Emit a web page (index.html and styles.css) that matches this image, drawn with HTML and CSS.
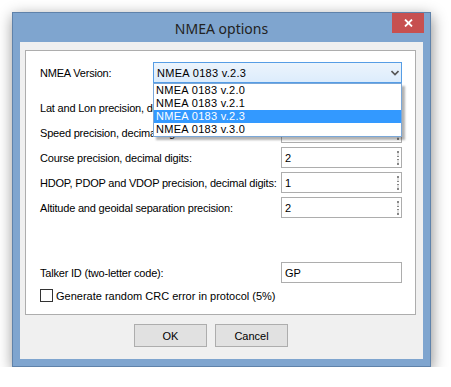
FILE: index.html
```html
<!DOCTYPE html>
<html lang="en">
<head>
    <meta charset="UTF-8">
    <meta name="viewport" content="width=device-width, initial-scale=1.0">
    <title>NMEA options</title>
    <link rel="stylesheet" href="styles.css">
</head>
<body>
    <div class="window">
        <div class="titlebar">
            <span class="title">NMEA options</span>
            <div class="close">
                <svg width="9" height="8" viewBox="0 0 9 8"><path d="M1 0.5 L8 7.5 M8 0.5 L1 7.5" stroke="#fff" stroke-width="1.8"/></svg>
            </div>
        </div>
        <div class="client">
            <div class="panel">
                <div class="row row-version">
                    <label>NMEA Version:</label>
                    <div class="combo">
                        <span>NMEA 0183 v.2.3</span>
                        <svg class="chevron" width="8" height="6" viewBox="0 0 8 6"><path d="M0.5 1 L4 4.5 L7.5 1" fill="none" stroke="#555" stroke-width="1.6"/></svg>
                        <ul class="combo-list">
                            <li>NMEA 0183 v.2.0</li>
                            <li>NMEA 0183 v.2.1</li>
                            <li class="selected">NMEA 0183 v.2.3</li>
                            <li>NMEA 0183 v.3.0</li>
                        </ul>
                    </div>
                </div>
                <div class="fields">
                    <div class="row">
                        <label>Lat and Lon precision, decimal digits:</label>
                        <div class="spin"><span>6</span><i class="spin-arrows"></i></div>
                    </div>
                    <div class="row">
                        <label>Speed precision, decimal digits:</label>
                        <div class="spin"><span>1</span><i class="spin-arrows"></i></div>
                    </div>
                    <div class="row">
                        <label>Course precision, decimal digits:</label>
                        <div class="spin"><span>2</span><i class="spin-arrows"></i></div>
                    </div>
                    <div class="row">
                        <label>HDOP, PDOP and VDOP precision, decimal digits:</label>
                        <div class="spin"><span>1</span><i class="spin-arrows"></i></div>
                    </div>
                    <div class="row">
                        <label>Altitude and geoidal separation precision:</label>
                        <div class="spin"><span>2</span><i class="spin-arrows"></i></div>
                    </div>
                </div>
                <div class="row row-talker">
                    <label>Talker ID (two-letter code):</label>
                    <div class="edit">GP</div>
                </div>
                <div class="check-row">
                    <span class="checkbox"></span>
                    <span>Generate random CRC error in protocol (5%)</span>
                </div>
            </div>
            <div class="buttons">
                <div class="btn">OK</div>
                <div class="btn">Cancel</div>
            </div>
        </div>
    </div>
</body>
</html>
```

FILE: styles.css
```css
:root{
    --frame : #7fa5cf;
    --frame-edge : #5f82aa;
    --client : #f0f0f0;
    --field-border : #adadad;
    --select : #3399ff;
}

*{
    padding: 0;
    margin: 0;
    box-sizing: border-box;
}

ul{
    list-style: none;
}

body{
    background: #fff;
    font-family: "Liberation Sans", Arial, sans-serif;
    font-size: 11px;
    color: #000;
    padding: 12px 0 0 12px;
}

label{
    white-space: nowrap;
    letter-spacing: -0.2px;
}

.window{
    width: 419px;
    height: 355px;
    background: var(--frame);
    border: 1px solid var(--frame-edge);
    box-shadow: 1px 4px 14px rgba(0, 0, 0, 0.45);
    padding: 0 7px 7px 7px;
    display: flex;
    flex-direction: column;
}

.titlebar{
    height: 29px;
    position: relative;
    display: flex;
    align-items: center;
    justify-content: center;
}

.title{
    font-family: "Noto Sans", sans-serif;
    font-size: 14px;
    color: #222;
    margin-top: 2px;
}

.close{
    position: absolute;
    right: -1px;
    top: 0;
    width: 32px;
    height: 20px;
    background: #c75050;
    display: flex;
    align-items: center;
    justify-content: center;
}

.client{
    flex: 1;
    background: var(--client);
    padding: 8px 7px 0 5px;
}

.panel{
    background: #fff;
    border: 1px solid var(--field-border);
    height: 265px;
    padding: 11px 13px 0 14px;
}

.row{
    display: flex;
    align-items: center;
    justify-content: space-between;
    height: 21px;
}

.combo{
    position: relative;
    width: 249px;
    height: 21px;
    border: 1px solid #569de5;
    background: linear-gradient(#ecf4fc, #dcecfc);
    display: flex;
    align-items: center;
    justify-content: space-between;
    padding: 0 2px 0 3px;
    letter-spacing: 0.3px;
}

.combo-list{
    position: absolute;
    left: -1px;
    right: -1px;
    top: 20px;
    background: #fff;
    border: 1px solid #7aa7d8;
    box-shadow: 3px 3px 2px rgba(0, 0, 0, 0.3);
    z-index: 2;
}

.combo-list li{
    height: 13px;
    line-height: 13px;
    padding-left: 2px;
}

.combo-list li.selected{
    background: var(--select);
    color: #fff;
}

.fields{
    margin-top: 14px;
    display: flex;
    flex-direction: column;
    gap: 4px;
}

.spin, .edit{
    width: 121px;
    height: 21px;
    border: 1px solid var(--field-border);
    background: #fff;
    display: flex;
    align-items: center;
    justify-content: space-between;
    padding: 0 2px 0 3px;
}

.spin-arrows{
    width: 2px;
    height: 14px;
    background: linear-gradient(#888 0 2px, #e2e2e2 2px 5px, #888 5px 6px, transparent 6px 8px, #888 8px 9px, #e2e2e2 9px 12px, #888 12px 14px);
}

.row-talker{
    margin-top: 44px;
}

.check-row{
    display: flex;
    align-items: center;
    gap: 3px;
    margin-top: 6px;
    height: 13px;
}

.checkbox{
    width: 13px;
    height: 13px;
    border: 1px solid #333;
    background: #fff;
}

.buttons{
    display: flex;
    gap: 8px;
    padding: 9px 0 0 109px;
}

.btn{
    width: 73px;
    height: 23px;
    border: 1px solid var(--field-border);
    background: #e1e1e1;
    display: flex;
    align-items: center;
    justify-content: center;
}
```
